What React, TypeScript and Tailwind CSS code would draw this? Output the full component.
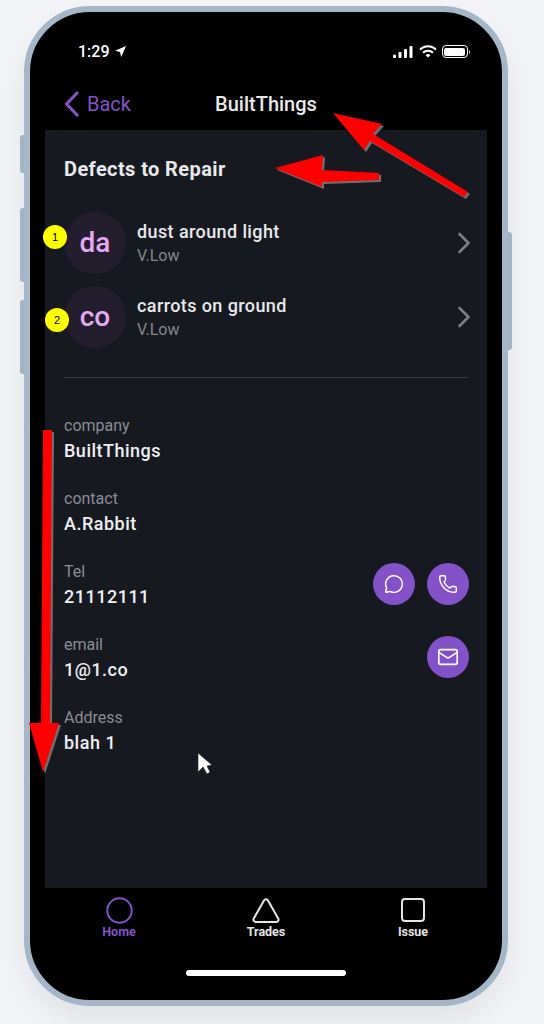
import {ChevronRight, Mail, MessageCircle, Phone} from 'lucide-react';
import type {ReactNode} from 'react';

const defects = [
  {initials: 'da', title: 'dust around light', level: 'V.Low'},
  {initials: 'co', title: 'carrots on ground', level: 'V.Low'},
];

function StatusBar() {
  return (
    <div className="flex h-[66px] shrink-0 items-start justify-between pl-[48px] pr-[32px] pt-[32px] text-white">
      <div className="flex items-center gap-[5px]">
        <span className="text-[16px] leading-[15px] font-medium">1:29</span>
        <svg width="11" height="11" viewBox="0 0 11 11" fill="white"><path d="M11 0 0 4.8l5 1.2 1.2 5z" /></svg>
      </div>
      <div className="flex items-center gap-[5px] pt-[1px]">
        <svg className="mr-[1px]" width="20" height="12" viewBox="0 0 20 12" fill="white">
          <rect x="0" y="8.5" width="3" height="3.5" rx="1" />
          <rect x="5.5" y="6" width="3" height="6" rx="1" />
          <rect x="11" y="3" width="3" height="9" rx="1" />
          <rect x="16.5" y="0" width="3" height="12" rx="1" />
        </svg>
        <svg width="18" height="13" viewBox="0 0 18 13" fill="none" stroke="white" strokeWidth="2">
          <path d="M1 4.6a11.5 11.5 0 0 1 16 0" />
          <path d="M4 7.7a7.2 7.2 0 0 1 10 0" />
          <path d="M9 12.6 6.6 10.2a3.4 3.4 0 0 1 4.8 0z" fill="white" stroke="none" />
        </svg>
        <div className="flex items-center">
          <div className="h-[13px] w-[26px] rounded-[4px] border border-white p-[1.5px]">
            <div className="h-full w-full rounded-[2px] bg-white" />
          </div>
          <div className="ml-[1px] h-[4px] w-[1.5px] rounded-r-sm bg-white/70" />
        </div>
      </div>
    </div>
  );
}

function DefectRow({initials, title, level}: {initials: string; title: string; level: string}) {
  return (
    <div className="flex h-[62px] items-center">
      <div className="flex h-[62px] w-[62px] shrink-0 items-center justify-center rounded-full bg-[#241d2e] text-[28px] font-medium text-[#e3a9f2]">
        {initials}
      </div>
      <div className="ml-[11px] flex-1 pb-[1px]">
        <p className="text-[18px] leading-[24px] font-medium tracking-[0.4px] text-[#e8e9ec]">{title}</p>
        <p className="mt-[2px] text-[16px] leading-[20px] text-[#85878d]">{level}</p>
      </div>
      <ChevronRight className="-mr-[13px] text-[#7c7e84]" size={36} strokeWidth={1.75} />
    </div>
  );
}

function RoundButton({children}: {children: ReactNode}) {
  return (
    <div className="flex h-[42px] w-[42px] items-center justify-center rounded-full bg-[#8352c8] text-white">
      {children}
    </div>
  );
}

function Detail({label, value, children}: {label: string; value: string; children?: ReactNode}) {
  return (
    <div className="relative h-[73px]">
      <p className="text-[16px] leading-[20px] text-[#8b8d93]">{label}</p>
      <p className="mt-[2px] text-[18px] leading-[26px] font-medium tracking-[0.5px] text-[#eef0f3]">{value}</p>
      {children}
    </div>
  );
}

function TabItem({label, active, children}: {label: string; active?: boolean; children: ReactNode}) {
  return (
    <div className={active ? 'flex w-[80px] flex-col items-center text-[#8352c8]' : 'flex w-[80px] flex-col items-center text-[#e4e6e9]'}>
      <div className="flex h-[26px] items-center justify-center">{children}</div>
      <span className="mt-[2px] text-[12.5px] leading-[14px] font-bold">{label}</span>
    </div>
  );
}

function Annotations() {
  return (
    <svg className="pointer-events-none absolute top-0 left-0" width="544" height="1024" viewBox="0 0 544 1024">
      <g fill="#6f6f6f" transform="translate(2 2)" className="blur-[0.6px]">
        <path d="M333 113 382 124 373 134 468 192 464 197 370 141 364 150z" />
        <path d="M275 168 323 155 322 170 379 173 379 180 322 182 322 187z" />
        <path d="M43 430 52 430 50 723 59 723 43 772 29 723 41 723z" />
      </g>
      <g fill="#ff0000">
        <path d="M333 113 382 124 373 134 468 192 464 197 370 141 364 150z" />
        <path d="M275 168 323 155 322 170 379 173 379 180 322 182 322 187z" />
        <path d="M43 430 52 430 50 723 59 723 43 772 29 723 41 723z" />
      </g>
      <path d="M198 753 198 772 203 767 207 774 210 772 207 766 212 765z" fill="white" stroke="#222" strokeWidth="0.6" />
    </svg>
  );
}

function Badge({n, className}: {n: number; className: string}) {
  return (
    <div className={`absolute flex h-[24px] w-[24px] items-center justify-center rounded-full bg-[#ffff00] font-['Liberation_Sans',sans-serif] text-[11px] text-black ${className}`}>
      {n}
    </div>
  );
}

export default function App() {
  return (
    <div className="relative h-[1024px] w-[544px] overflow-hidden bg-[#f3f4f7] font-['Roboto',sans-serif]">
      <div className="pt-[6px] pl-[24px]">
        <div className="relative h-[1000px] w-[484px]">
          <div className="absolute top-[129px] left-[-4px] h-[38px] w-[6px] rounded-l-[3px] bg-[#a9bacb]" />
          <div className="absolute top-[202px] left-[-4px] h-[74px] w-[6px] rounded-l-[3px] bg-[#a9bacb]" />
          <div className="absolute top-[294px] left-[-4px] h-[74px] w-[6px] rounded-l-[3px] bg-[#a9bacb]" />
          <div className="absolute top-[226px] right-[-4px] h-[118px] w-[6px] rounded-r-[3px] bg-[#a9bacb]" />

          <div className="relative flex h-full w-full flex-col overflow-hidden rounded-[66px] border-[6px] border-[#a5b6c9] bg-black shadow-[0_16px_30px_rgba(0,0,0,0.07)]">
            <StatusBar />

            <div className="relative flex h-[52px] shrink-0 items-center justify-center text-[20px] font-medium text-[#e8e9ec]">
              <div className="absolute left-[34px] flex items-center gap-[8px] text-[20px] font-normal text-[#8352c8]">
                <svg width="15" height="26" viewBox="0 0 15 26" fill="none" stroke="currentColor" strokeWidth="3.2" strokeLinecap="round" strokeLinejoin="round">
                  <path d="M13 2 2.5 13 13 24" />
                </svg>
                <span>Back</span>
              </div>
              <span>BuiltThings</span>
            </div>

            <main className="mx-[15px] flex-1 bg-[#161920] pl-[19px] pr-[18px]">
              <h1 className="mt-[25px] text-[20px] leading-[28px] font-bold tracking-[0.4px] text-[#e8e9ec]">Defects to Repair</h1>
              <div className="mt-[29px] flex flex-col gap-[12px]">
                {defects.map((d) => (
                  <DefectRow key={d.initials} {...d} />
                ))}
              </div>
              <div className="mt-[29px] h-px bg-[#3a3c43]" />
              <div className="mt-[38px]">
                <Detail label="company" value="BuiltThings" />
                <Detail label="contact" value="A.Rabbit" />
                <Detail label="Tel" value="21112111">
                  <div className="absolute top-[1px] right-0 flex gap-[12px]">
                    <RoundButton><MessageCircle size={20} strokeWidth={1.75} /></RoundButton>
                    <RoundButton><Phone size={20} strokeWidth={1.75} /></RoundButton>
                  </div>
                </Detail>
                <Detail label="email" value="1@1.co">
                  <div className="absolute top-[1px] right-0">
                    <RoundButton><Mail size={22} strokeWidth={1.75} /></RoundButton>
                  </div>
                </Detail>
                <Detail label="Address" value="blah 1" />
              </div>
            </main>

            <nav className="flex h-[112px] shrink-0 justify-around pl-[12px] pr-[12px] pt-[9px]">
              <div className="flex w-full justify-between px-[37px]">
                <TabItem label="Home" active>
                  <svg width="27" height="27" viewBox="0 0 27 27" fill="none" stroke="currentColor" strokeWidth="2"><circle cx="13.5" cy="13.5" r="12.2" /></svg>
                </TabItem>
                <TabItem label="Trades">
                  <svg width="28" height="25" viewBox="0 0 28 25" fill="none" stroke="currentColor" strokeWidth="2">
                    <path d="M12 2.5a2.3 2.3 0 0 1 4 0L26.2 20.5a2.3 2.3 0 0 1-2 3.5H3.8a2.3 2.3 0 0 1-2-3.5z" />
                  </svg>
                </TabItem>
                <TabItem label="Issue">
                  <div className="h-[24px] w-[24px] rounded-[4px] border-2 border-current" />
                </TabItem>
              </div>
            </nav>

            <div className="absolute bottom-[24px] left-[156px] h-[6px] w-[160px] rounded-full bg-white" />
          </div>
        </div>
      </div>

      <Badge n={1} className="top-[225px] left-[43px]" />
      <Badge n={2} className="top-[308px] left-[45px]" />
      <Annotations />
    </div>
  );
}
